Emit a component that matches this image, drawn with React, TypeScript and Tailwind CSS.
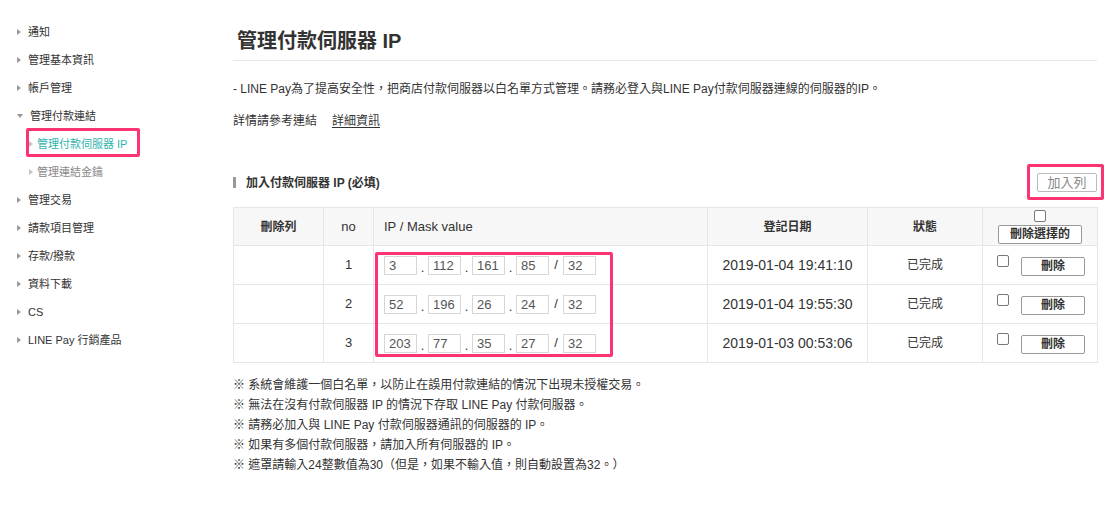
import React from 'react';

// 側邊選單項目
const menuItems = [
  { label: '通知' },
  { label: '管理基本資訊' },
  { label: '帳戶管理' },
  { label: '管理付款連結', open: true },
  { label: '管理付款伺服器 IP', sub: true, active: true },
  { label: '管理連結金鑰', sub: true },
  { label: '管理交易' },
  { label: '請款項目管理' },
  { label: '存款/撥款' },
  { label: '資料下載' },
  { label: 'CS' },
  { label: 'LINE Pay 行銷產品' },
];

const rows = [
  { no: 1, ip: ['3', '112', '161', '85'], mask: '32', date: '2019-01-04 19:41:10' },
  { no: 2, ip: ['52', '196', '26', '24'], mask: '32', date: '2019-01-04 19:55:30' },
  { no: 3, ip: ['203', '77', '35', '27'], mask: '32', date: '2019-01-03 00:53:06' },
];

const notes = [
  '※ 系統會維護一個白名單，以防止在誤用付款連結的情況下出現未授權交易。',
  '※ 無法在沒有付款伺服器 IP 的情況下存取 LINE Pay 付款伺服器。',
  '※ 請務必加入與 LINE Pay 付款伺服器通訊的伺服器的 IP。',
  '※ 如果有多個付款伺服器，請加入所有伺服器的 IP。',
  '※ 遮罩請輸入24整數值為30（但是，如果不輸入值，則自動設置為32。）',
];

const Arrow = ({ open = false, light = false }) =>
  open ? (
    <span className="inline-block w-0 h-0 border-x-[3px] border-x-transparent border-t-[4px] border-t-[#999]" />
  ) : (
    <span
      className={`inline-block w-0 h-0 border-y-[3px] border-y-transparent border-l-[4px] ${
        light ? 'border-l-[#c4c4c4]' : 'border-l-[#999]'
      }`}
    />
  );

const Checkbox = () => (
  <input
    type="checkbox"
    className="appearance-none w-[12px] h-[12px] border border-[#777] rounded-[2px] bg-white m-0 block"
  />
);

const IpBox = ({ value }) => (
  <div className="w-[33px] h-[19px] border border-[#d6d6d6] text-[13px] leading-[17px] text-[#555] pl-[4px]">
    {value}
  </div>
);

export default function App() {
  return (
    <div
      className="relative flex w-[1112px] h-[526px] bg-white text-[#333]"
      style={{ fontFamily: '"Liberation Sans", "Noto Sans CJK TC", sans-serif' }}
    >
      {/* 側邊選單 */}
      <aside className="w-[233px] shrink-0 pt-[18px]">
        {menuItems.map((item) => (
          <div
            key={item.label}
            className={`flex items-center h-[28px] text-[11px] ${item.sub ? 'pl-[29px] gap-[4px]' : 'pl-[17px] gap-[7px]'} ${
              item.active ? 'text-[#2fb3ad]' : item.sub ? 'text-[#888]' : 'text-[#333]'
            }`}
          >
            <Arrow open={item.open} light={item.sub} />
            <span>{item.label}</span>
          </div>
        ))}
      </aside>

      {/* 主內容 */}
      <main className="w-[864px] pt-[27px]">
        <h1 className="text-[20px] leading-[28px] font-bold pl-[4px] pb-[5px] border-b border-[#e8e8e8]">
          管理付款伺服器 IP
        </h1>

        <p className="mt-[19px] text-[12px] leading-[18px]">
          - LINE Pay為了提高安全性，把商店付款伺服器以白名單方式管理。請務必登入與LINE Pay付款伺服器連線的伺服器的IP。
        </p>
        <p className="mt-[14px] text-[12px] leading-[18px]">
          詳情請參考連結<span className="ml-[15px] underline underline-offset-2">詳細資訊</span>
        </p>

        <div className="mt-[42px] flex items-center justify-between h-[21px]">
          <div className="flex items-center gap-[10px]">
            <span className="w-[3px] h-[11px] bg-[#999]" />
            <span className="text-[12px] font-bold">加入付款伺服器 IP (必填)</span>
          </div>
          <button className="w-[60px] h-[19px] border border-[#bbb] rounded-[2px] text-[13px] leading-[17px] text-[#888] bg-white">
            加入列
          </button>
        </div>

        <table className="mt-[14px] w-[864px] border-collapse table-fixed text-[12px]">
          <colgroup>
            <col className="w-[90px]" />
            <col className="w-[50px]" />
            <col className="w-[334px]" />
            <col className="w-[160px]" />
            <col className="w-[115px]" />
            <col className="w-[115px]" />
          </colgroup>
          <thead>
            <tr className="h-[38px] bg-[#f7f7f7]">
              <th className="border border-[#e6e6e6] font-bold">刪除列</th>
              <th className="border border-[#e6e6e6] font-normal text-[13px]">no</th>
              <th className="border border-[#e6e6e6] font-normal text-[13px] text-left pl-[10px]">IP / Mask value</th>
              <th className="border border-[#e6e6e6] font-bold">登記日期</th>
              <th className="border border-[#e6e6e6] font-bold">狀態</th>
              <th className="border border-[#e6e6e6] p-0">
                <div className="flex flex-col items-center gap-[3px]">
                  <Checkbox />
                  <button className="w-[84px] h-[19px] border border-[#999] rounded-[2px] bg-white text-[12px] leading-[17px] font-bold">
                    刪除選擇的
                  </button>
                </div>
              </th>
            </tr>
          </thead>
          <tbody>
            {rows.map((r) => (
              <tr key={r.no} className="h-[39px]">
                <td className="border border-[#e6e6e6]" />
                <td className="border border-[#e6e6e6] text-center text-[13px]">{r.no}</td>
                <td className="border border-[#e6e6e6] pl-[10px]">
                  <div className="flex items-center">
                    {r.ip.map((part, i) => (
                      <React.Fragment key={i}>
                        {i > 0 && <span className="w-[11px] text-center text-[13px] leading-none pt-[4px]">.</span>}
                        <IpBox value={part} />
                      </React.Fragment>
                    ))}
                    <span className="w-[14px] text-center text-[13px]">/</span>
                    <IpBox value={r.mask} />
                  </div>
                </td>
                <td className="border border-[#e6e6e6] text-center text-[14px]">{r.date}</td>
                <td className="border border-[#e6e6e6] text-center">已完成</td>
                <td className="border border-[#e6e6e6] pl-[14px]">
                  <div className="flex items-start gap-[12px]">
                    <Checkbox />
                    <button className="mt-[2px] w-[64px] h-[19px] border border-[#999] rounded-[2px] bg-white text-[12px] leading-[17px] font-bold">
                      刪除
                    </button>
                  </div>
                </td>
              </tr>
            ))}
          </tbody>
        </table>

        <ul className="mt-[12px] text-[12px] leading-[20px]">
          {notes.map((n) => (
            <li key={n}>{n}</li>
          ))}
        </ul>
      </main>

      {/* 標註框 */}
      <div className="absolute left-[26px] top-[128px] w-[114px] h-[29px] border-[3px] border-[#fe3472] rounded-[2px] pointer-events-none" />
      <div className="absolute left-[1027px] top-[164px] w-[77px] h-[36px] border-[3px] border-[#fe3472] rounded-[2px] pointer-events-none" />
      <div className="absolute left-[375px] top-[252px] w-[238px] h-[105px] border-[3px] border-[#fe3472] rounded-[2px] pointer-events-none" />
    </div>
  );
}
